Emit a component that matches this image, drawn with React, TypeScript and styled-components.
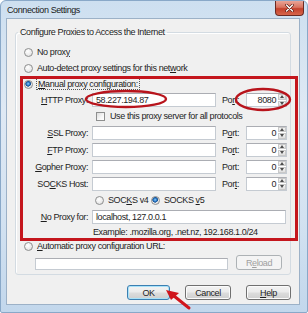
import React from "react";
import styled, { createGlobalStyle, css } from "styled-components";

const Global = createGlobalStyle`
  html, body { margin: 0; padding: 0; background: #ffffff; }
  body {
    font-family: "Liberation Sans", Arial, sans-serif;
    font-size: 9px;
    letter-spacing: -0.4px;
    color: #1e1e1e;
  }
  * { box-sizing: border-box; }
`;

const Window = styled.div`
  position: relative;
  width: 308px;
  height: 313px;
  display: flex;
  flex-direction: column;
  padding: 0 7px 7px 5px;
  background: linear-gradient(180deg, #cddff0 0%, #dfe9f4 35%, #d3e2f1 70%, #c2d7ec 100%);
  border: 1px solid #89a8c8;
  border-radius: 6px 6px 2px 2px;
  overflow: hidden;
`;

const TitleBar = styled.div`
  height: 17px;
  display: flex;
  align-items: center;
  justify-content: space-between;
  margin-right: -4px;
`;

const Title = styled.span`
  padding-left: 1px;
  color: #1a1a1a;
`;

const CloseButton = styled.div`
  align-self: flex-start;
  width: 29px;
  height: 15px;
  border: 1px solid #6b2a22;
  border-top: none;
  border-radius: 0 0 4px 4px;
  background: linear-gradient(180deg, #e9a597 0%, #d9735f 45%, #c4412c 55%, #d7664b 100%);
  display: flex;
  align-items: center;
  justify-content: center;
`;

const Client = styled.div`
  flex: 1;
  background: #f0f0f0;
  border: 1px solid #9cb1c7;
  display: flex;
  flex-direction: column;
  padding: 0 8px;
`;

const Group = styled.fieldset`
  margin: 8px 0 0 0;
  padding: 0;
  border: 1px solid #d3dbe2;
  border-radius: 3px;
  box-shadow: inset 1px 1px 0 #ffffff;
`;

const Legend = styled.legend`
  margin-left: 2px;
  padding: 0 2px;
  line-height: 11px;
  color: #1e1e1e;
`;

const GroupBody = styled.div`
  display: flex;
  flex-direction: column;
  padding: 6px 0 4px 0;
`;

const RadioRow = styled.div<{ $indent?: number }>`
  height: 16px;
  display: flex;
  align-items: center;
  gap: 4px;
  padding-left: ${(p) => p.$indent ?? 8}px;
`;

const Radio = styled.span<{ $checked?: boolean }>`
  flex: none;
  width: 9px;
  height: 9px;
  border-radius: 50%;
  border: 1px solid #8e8f8f;
  background: radial-gradient(circle at 40% 35%, #ffffff 0%, #ececec 55%, #cfd1d3 100%);
  ${(p) =>
    p.$checked &&
    css`
      background: radial-gradient(circle at 45% 40%, #8fd3ff 0, #2a78c6 1.6px, #164f8f 2.6px, transparent 3px),
        radial-gradient(circle at 40% 35%, #ffffff 0%, #ececec 55%, #cfd1d3 100%);
    `}
`;

const Focused = styled.span`
  outline: 1px dotted #555;
  outline-offset: 0;
  padding: 0 1px;
  line-height: 10px;
`;

const Key = styled.span`
  text-decoration: underline;
  text-underline-offset: 1px;
`;

const FieldRow = styled.div<{ $h?: number }>`
  height: ${(p) => p.$h ?? 17}px;
  display: flex;
  align-items: center;
`;

const Label = styled.span`
  width: 72px;
  text-align: right;
  flex: none;
  white-space: nowrap;
`;

const TextBox = styled.div<{ $w: number; $ml?: number; $h?: number }>`
  width: ${(p) => p.$w}px;
  height: ${(p) => p.$h ?? 14}px;
  margin-left: ${(p) => p.$ml ?? 4}px;
  flex: none;
  background: #ffffff;
  border: 1px solid #c5cbd2;
  border-top-color: #abadb3;
  display: flex;
  align-items: center;
  padding-left: 3px;
  white-space: nowrap;
  overflow: hidden;
`;

const PortLabel = styled.span`
  width: 24px;
  margin-left: 6px;
  flex: none;
`;

const PortBox = styled.div`
  width: 41px;
  height: 14px;
  flex: none;
  display: flex;
  background: #ffffff;
  border: 1px solid #c5cbd2;
  border-top-color: #abadb3;
`;

const PortValue = styled.span`
  flex: 1;
  text-align: right;
  padding-right: 2px;
  line-height: 12px;
`;

const Spinner = styled.div`
  width: 8px;
  display: flex;
  flex-direction: column;
  gap: 1px;
`;

const SpinHalf = styled.div`
  flex: 1;
  background: linear-gradient(180deg, #f6f6f6, #dedede);
  border: 1px solid #c9c9c9;
  display: flex;
  align-items: center;
  justify-content: center;
`;

const CheckRow = styled.div`
  height: 16px;
  display: flex;
  align-items: center;
  gap: 5px;
  padding-left: 80px;
`;

const Check = styled.span`
  flex: none;
  width: 9px;
  height: 9px;
  border: 1px solid #8e8f8f;
  background: linear-gradient(135deg, #dcdcdc 0%, #f7f7f7 60%, #ffffff 100%);
`;

const SocksRow = styled.div`
  height: 16px;
  display: flex;
  align-items: center;
  padding-left: 79px;
`;

const SocksOption = styled.span<{ $w?: number }>`
  display: flex;
  align-items: center;
  gap: 4px;
  width: ${(p) => p.$w ?? 56}px;
`;

const ExampleRow = styled.div`
  height: 13px;
  display: flex;
  align-items: center;
  padding-left: 77px;
`;

const UrlRow = styled.div`
  height: 16px;
  display: flex;
  align-items: flex-end;
  padding-left: 19px;
  gap: 8px;
`;

const Button = styled.div<{ $w: number; $default?: boolean; $disabled?: boolean }>`
  width: ${(p) => p.$w}px;
  height: 15px;
  flex: none;
  display: flex;
  align-items: center;
  justify-content: center;
  border: 1px solid #707070;
  border-radius: 3px;
  background: linear-gradient(180deg, #f3f3f3 0%, #ebebeb 48%, #dddddd 52%, #cfcfcf 100%);
  box-shadow: inset 0 0 0 1px #fbfbfb;
  color: #1e1e1e;
  ${(p) =>
    p.$default &&
    css`
      border-color: #3c7fb1;
      box-shadow: inset 0 0 0 1px #a7e2fa;
    `}
  ${(p) =>
    p.$disabled &&
    css`
      border-color: #adb2b5;
      background: #f4f4f4;
      box-shadow: none;
      color: #a0a0a0;
    `}
`;

const ButtonRow = styled.div`
  margin-top: 10px;
  display: flex;
  justify-content: flex-end;
  gap: 15px;
`;

const Annotations = styled.svg`
  position: absolute;
  left: 0;
  top: 0;
  pointer-events: none;
`;

const Arrow = ({ up }: { up?: boolean }) => (
  <svg width="4" height="3" viewBox="0 0 4 3">
    <path d={up ? "M0 3 L2 0 L4 3 Z" : "M0 0 L2 3 L4 0 Z"} fill="#4d4d4d" />
  </svg>
);

const Port = ({ value, k }: { value: string; k: React.ReactNode }) => (
  <>
    <PortLabel>{k}</PortLabel>
    <PortBox>
      <PortValue>{value}</PortValue>
      <Spinner>
        <SpinHalf>
          <Arrow up />
        </SpinHalf>
        <SpinHalf>
          <Arrow />
        </SpinHalf>
      </Spinner>
    </PortBox>
  </>
);

const proxies: { label: React.ReactNode; port: React.ReactNode }[] = [
  { label: <><Key>S</Key>SL Proxy:</>, port: <>P<Key>o</Key>rt:</> },
  { label: <><Key>F</Key>TP Proxy:</>, port: <>Po<Key>r</Key>t:</> },
  { label: <><Key>G</Key>opher Proxy:</>, port: <>Port:</> },
  { label: <>SO<Key>C</Key>KS Host:</>, port: <>Por<Key>t</Key>:</> },
];

export default function App() {
  return (
    <>
      <Global />
      <Window>
        <TitleBar>
          <Title>Connection Settings</Title>
          <CloseButton>
            <svg width="9" height="8" viewBox="0 0 9 8">
              <path d="M1.5 1 L7.5 7 M7.5 1 L1.5 7" stroke="#5a1d14" strokeWidth="2.6" strokeLinecap="round" />
              <path d="M1.5 1 L7.5 7 M7.5 1 L1.5 7" stroke="#ffffff" strokeWidth="1.4" strokeLinecap="round" />
            </svg>
          </CloseButton>
        </TitleBar>
        <Client>
          <Group>
            <Legend>Configure Proxies to Access the Internet</Legend>
            <GroupBody>
              <RadioRow>
                <Radio />
                <span>
                  No prox<Key>y</Key>
                </span>
              </RadioRow>
              <RadioRow>
                <Radio />
                <span>
                  Auto-detect proxy settings for this net<Key>w</Key>ork
                </span>
              </RadioRow>
              <RadioRow>
                <Radio $checked />
                <Focused>
                  <Key>M</Key>anual proxy configuration:
                </Focused>
              </RadioRow>
              <FieldRow $h={16}>
                <Label>
                  <Key>H</Key>TTP Proxy:
                </Label>
                <TextBox $w={124}>58.227.194.87</TextBox>
                <Port value="8080" k={<>Po<Key>r</Key>t:</>} />
              </FieldRow>
              <CheckRow>
                <Check />
                <span>Use this proxy server for all protocols</span>
              </CheckRow>
              {proxies.map((p, i) => (
                <FieldRow key={i}>
                  <Label>{p.label}</Label>
                  <TextBox $w={124} />
                  <Port value="0" k={p.port} />
                </FieldRow>
              ))}
              <SocksRow>
                <SocksOption>
                  <Radio />
                  <span>
                    SOC<Key>K</Key>S v4
                  </span>
                </SocksOption>
                <SocksOption>
                  <Radio $checked />
                  <span>
                    SOCKS <Key>v</Key>5
                  </span>
                </SocksOption>
              </SocksRow>
              <FieldRow>
                <Label>
                  <Key>N</Key>o Proxy for:
                </Label>
                <TextBox $w={194}>localhost, 127.0.0.1</TextBox>
              </FieldRow>
              <ExampleRow>Example: .mozilla.org, .net.nz, 192.168.1.0/24</ExampleRow>
              <RadioRow>
                <Radio />
                <span>
                  <Key>A</Key>utomatic proxy configuration URL:
                </span>
              </RadioRow>
              <UrlRow>
                <TextBox $w={193} $ml={0} $h={12} />
                <Button $w={46} $disabled>
                  R<Key>e</Key>load
                </Button>
              </UrlRow>
            </GroupBody>
          </Group>
          <ButtonRow>
            <Button $w={43} $default>
              OK
            </Button>
            <Button $w={46}>Cancel</Button>
            <Button $w={45}>
              <Key>H</Key>elp
            </Button>
          </ButtonRow>
        </Client>
        <Annotations width="308" height="313" viewBox="0 0 308 313">
          <rect x="20.5" y="76.5" width="275" height="162" fill="none" stroke="#c4161d" strokeWidth="3" />
          <ellipse cx="125" cy="98" rx="40" ry="8" fill="none" stroke="#b8141c" strokeWidth="2.4" />
          <ellipse cx="262" cy="98.5" rx="27" ry="10.5" fill="none" stroke="#b8141c" strokeWidth="2.4" />
          <path d="M188 307 L173 295" stroke="#d0161d" strokeWidth="3" strokeLinecap="round" />
          <path d="M165 289 L178 292 L170 299 Z" fill="#d0161d" />
        </Annotations>
      </Window>
    </>
  );
}
